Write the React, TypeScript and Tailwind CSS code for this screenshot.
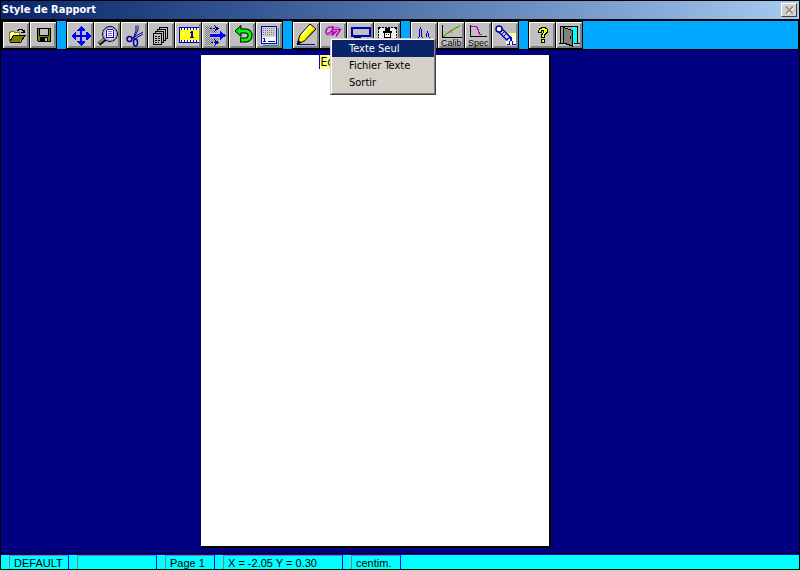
import React from "react";

type IconProps = { children: React.ReactNode };

function Icon({ children }: IconProps) {
  return (
    <svg
      className="block h-[27px] w-[27px]"
      viewBox="0 0 27 27"
      fill="none"
      shapeRendering="crispEdges"
      aria-hidden="true"
    >
      {children}
    </svg>
  );
}

function ToolButton({
  label,
  caption,
  children,
}: {
  label: string;
  caption?: string;
  children: React.ReactNode;
}) {
  return (
    <button
      type="button"
      aria-label={label}
      className="relative block h-[27px] w-[27px] shrink-0 bg-[#c0c0c0]"
    >
      <Icon>
        <path d="M0 26.5H27M26.5 0V27" stroke="#000" />
        <path d="M0.5 26V0.5H26" stroke="#fff" />
        <path d="M1 25.5H25.5V1M2 24.5H24.5V2" stroke="#808080" />
        {children}
      </Icon>
      {caption && (
        <span className="absolute bottom-[2px] left-[3px] font-['Liberation_Sans',sans-serif] text-[9px] leading-[8px] text-black">
          {caption}
        </span>
      )}
    </button>
  );
}

function Group({ children }: IconProps) {
  return <div className="flex border-t border-l border-black">{children}</div>;
}

const menuItems = ["Texte Seul", "Fichier Texte", "Sortir"];

function TextMenu() {
  return (
    <div
      role="menu"
      className="absolute top-[16px] left-[10px] z-10 w-[106px] border border-t-[#d4d0c8] border-l-[#d4d0c8] border-r-[#404040] border-b-[#404040] bg-[#d4d0c8]"
    >
      <div className="border border-t-white border-l-white border-r-[#808080] border-b-[#808080] pb-[2px]">
        {menuItems.map((item, i) => (
          <button
            key={item}
            type="button"
            role="menuitem"
            className={
              i === 0
                ? "block h-[17px] w-full bg-[#0a246a] pl-[17px] text-left leading-[18px] text-white"
                : "block h-[17px] w-full pl-[17px] text-left leading-[18px] text-black"
            }
          >
            {item}
          </button>
        ))}
      </div>
    </div>
  );
}

function Toolbar() {
  return (
    <div className="mr-px flex gap-[9px] border-t-2 border-b border-black bg-[#00a8ff]">
      <div className="flex border-t border-l-2 border-black">
        <ToolButton label="Ouvrir">
          <path d="M6 10H7V9H11V10H16V13H10L6 19Z" fill="#ffffa0" />
          <path d="M6.5 19V10.5H7.5V9.5H11.5V10.5H16.5V13" stroke="#808000" />
          <path d="M6 20L11 13H22L17 20Z" fill="#808000" />
          <path d="M6.5 20.5H17.5L22 13.5H10.5L7 19" stroke="#000" />
          <path d="M14 8.5H15V7.5H19V8.5H20V10M18 10.5H22M21.5 8V11" stroke="#000" />
        </ToolButton>
        <ToolButton label="Enregistrer">
          <path d="M7 6H21V20H8L7 19Z" fill="#000" />
          <path d="M8 7H20V19H8Z" fill="#808000" />
          <path d="M10 7H18V13H10Z" fill="#c0c0c0" />
          <path d="M9.5 7V13.5H18.5V7" stroke="#000" />
          <path d="M10 15H18V20H10Z" fill="#000" />
          <path d="M15 16H17V19H15Z" fill="#c0c0c0" />
        </ToolButton>
      </div>
      <Group>
        <ToolButton label="Déplacer">
          <path
            d="M14 4L18 8V9H15V13H19V10H20L24 14L20 18H19V15H15V19H18V20L14 24L10 20V19H13V15H9V18H8L4 14L8 10H9V13H13V9H10V8Z"
            fill="#0000ff"
          />
        </ToolButton>
        <ToolButton label="Loupe">
          <g shapeRendering="auto">
            <path d="M11 17L5 22" stroke="#000" strokeWidth="4" />
            <path d="M11 16L5 21" stroke="#909090" strokeWidth="2" />
            <circle cx="16" cy="12" r="7.5" fill="#d8d8d8" stroke="#000" />
            <circle cx="16" cy="12" r="6.5" stroke="#909090" />
          </g>
          <path d="M13.5 7.5H18.5L19.5 8.5V15.5H12.5V8.5Z" fill="#fff" stroke="#0000ff" />
          <path d="M14 9.5H18M14 11.5H18M14 13.5H18" stroke="#8080c0" />
        </ToolButton>
        <ToolButton label="Couper">
          <g shapeRendering="auto">
            <path d="M15 3.5V9L12 17M17 3.5V8L13 16" stroke="#0000a0" />
            <path d="M22 10L11 16.5M22 12L13 17.5" stroke="#0000a0" />
            <circle cx="8.5" cy="17" r="2.5" stroke="#0000a0" strokeWidth="1.5" />
            <ellipse cx="14.5" cy="20.5" rx="2" ry="3.5" stroke="#0000a0" strokeWidth="1.5" />
          </g>
        </ToolButton>
        <ToolButton label="Pages">
          <path d="M11.5 5.5H19.5V16.5H11.5Z" fill="#c0c0c0" stroke="#000" />
          <path d="M9.5 7.5H17.5V18.5H9.5Z" fill="#c0c0c0" stroke="#000" />
          <path d="M7.5 9.5H15.5V20.5H7.5Z" fill="#c0c0c0" stroke="#000" />
          <path d="M5.5 11.5H13.5V22.5H5.5Z" fill="#c0c0c0" stroke="#000" />
          <path d="M7 14.5H13M7 16.5H13M7 18.5H13M7 20.5H11" stroke="#000" strokeDasharray="2 1" />
        </ToolButton>
        <ToolButton label="Règle">
          <path d="M4 5H24V21H4Z" fill="#ffff00" />
          <path d="M4 5.5H24M4 20.5H24" stroke="#0000c0" />
          <path d="M5 7H24M5 19H24" stroke="#fff" strokeWidth="2" />
          <path d="M6 7H24M6 19H24" stroke="#0000c0" strokeWidth="2" strokeDasharray="1 2" />
          <path d="M4.5 5V21" stroke="#0000c0" />
          <path d="M16 9H18V15H19V16H15V15H16V11H15V10H16Z" fill="#0000c0" />
          <path d="M8 11H10V13H8Z" fill="#fff" />
        </ToolButton>
        <ToolButton label="Aligner">
          <path
            d="M3 4.5H11M4 5.5H12M3 6.5H11M4 7.5H12M3 8.5H15M4 9.5H16M3 10.5H17M4 11.5H8M3 12.5H8M4 13.5H8M3 14.5H8M4 15.5H8M3 16.5H17M4 17.5H18M3 18.5H17M4 19.5H14M3 20.5H11M4 21.5H11M3 22.5H11"
            stroke="#808080"
            strokeDasharray="1 1"
          />
          <path d="M8 6.5H14M9 20.5H14" stroke="#0000a0" strokeDasharray="2 1" />
          <path d="M12 3L17 6.5L12 10L14 6.5ZM12 17L17 20.5L12 24L14 20.5Z" fill="#0000a0" />
          <path d="M8 12H18V9L24 13.5L18 18V15H8Z" fill="#0000ff" />
        </ToolButton>
        <ToolButton label="Annuler">
          <g shapeRendering="auto">
            <path d="M10 9H17Q21 9.5 21 13.5Q21 17.5 17 18H11" stroke="#000" strokeWidth="5" />
            <path d="M12 3.5V14.5L6 9Z" fill="#00e000" stroke="#000" />
            <path d="M10 9H17Q21 9.5 21 13.5Q21 17.5 17 18H12" stroke="#00ff00" strokeWidth="3" />
          </g>
        </ToolButton>
        <ToolButton label="Rapport">
          <path d="M7 23H22V6" stroke="#00a0a0" />
          <path d="M5.5 4.5H20.5V21.5H5.5Z" fill="#d0d0d0" stroke="#0000c0" />
          <path d="M7 6.5H19M7 8.5H19M7 10.5H19M7 12.5H19" stroke="#808080" strokeDasharray="1 1" />
          <path d="M6 15H20V21H6Z" fill="#fff" />
          <path d="M8.5 16V20M7 16.5H8M7 19.5H10M12 19.5H19" stroke="#0000c0" />
        </ToolButton>
      </Group>
      <Group>
        <ToolButton label="Dessiner">
          <path d="M4 22.5H22" stroke="#0000c0" />
          <g shapeRendering="auto">
            <path d="M17 2L23 7L12 18.5L4 22.5L7 13Z" fill="#ffff00" stroke="#000" />
            <path d="M16 4L8 13L10 14L18 5Z" fill="#ffffc0" />
            <path d="M21.5 7L12 17.5" stroke="#808000" />
            <path d="M4 22.5L5.5 18L8.5 20.5Z" fill="#000" />
          </g>
        </ToolButton>
        <div className="relative">
          <ToolButton label="Ecrire">
            <g shapeRendering="auto">
              <path
                d="M14 5H11Q7 5 6 9Q5 12 8 11.5Q11 11 13.5 5L12 11.5L15 9.5M14 7.5H20.5L16 14.5M12 13.5L17 9"
                stroke="#c000c0"
                strokeWidth="1.5"
              />
              <path d="M15 5L20 6M6 13H11" stroke="#7070a0" />
            </g>
            <path d="M10 18.5H13" stroke="#0000c0" />
          </ToolButton>
          <TextMenu />
        </div>
        <ToolButton label="Cadre">
          <path d="M5 6H23V14H5Z" stroke="#0000c0" strokeWidth="2" />
          <path d="M7 15.5H14" stroke="#000" />
        </ToolButton>
        <ToolButton label="Image">
          <path d="M5 6H22V23H5Z" fill="#f0f0f0" />
          <path d="M5 5.5H22M4.5 6V23M22.5 6V23" stroke="#000" strokeDasharray="2 1" />
          <path d="M4 5H6V7H4ZM21 5H23V7H21Z" fill="#000" />
          <path d="M11 6H16V9H18V11H9V9H11Z" fill="#000" />
          <path d="M10.5 10.5H16.5V15.5H10.5Z" fill="#fff" stroke="#000" />
          <path d="M12 12H13V13H12ZM14 12H15V13H14Z" fill="#000" />
        </ToolButton>
      </Group>
      <Group>
        <ToolButton label="Chromatogramme">
          <path d="M7.5 17V15M8.5 15V7M9.5 7V5M10.5 7V15M11.5 15V17M15.5 15V11M16.5 11V9M17.5 11V15M18.5 15V17" stroke="#0000c0" />
        </ToolButton>
        <ToolButton label="Etalonnage" caption="Calib">
          <path d="M4.5 3V15.5H24" stroke="#000" />
          <g shapeRendering="auto">
            <path d="M5 15L11 10L22 3.5" stroke="#ff0000" />
          </g>
          <path d="M7 11H9V13H7ZM12 9H14V11H12ZM15 6H17V8H15ZM19 4H21V6H19Z" fill="#00ff00" />
        </ToolButton>
        <ToolButton label="Spectre" caption="Spec">
          <path d="M5.5 3V14.5H22" stroke="#000" />
          <path d="M6 4.5H11.5V5.5H12.5V7.5H13.5V10.5H14.5V12.5H17" stroke="#c000c0" />
        </ToolButton>
        <ToolButton label="Recherche">
          <path d="M14 11H24V23H14Z" fill="#fff" />
          <path d="M14 11.5H24M15 13.5H24M14 16.5H24M15 19.5H24M14 22.5H24" stroke="#ffff00" strokeDasharray="1 1" />
          <path d="M15 22.5H17.5V19M18.5 19V15M19.5 15V19M20.5 19V22.5H24" stroke="#0000ff" />
          <g shapeRendering="auto">
            <path d="M8 8L17 17" stroke="#0000a0" strokeWidth="6" />
            <path d="M8 8L16 16" stroke="#d0d0ff" strokeWidth="3" />
            <circle cx="7" cy="7" r="3" fill="#fff" stroke="#0000a0" strokeWidth="1.5" />
            <path d="M9 13L13 9M11 15L15 11" stroke="#0000a0" />
          </g>
        </ToolButton>
      </Group>
      <Group>
        <ToolButton label="Aide">
          <path d="M9 11V8H10V6H12V5H17V6H18V7H19V11H18V12H17V13H16V16H12V12H13V11H14V9H13V11Z" fill="#000" />
          <path d="M10 10V8H11V7H13V6H16V7H18V10H17V11H16V12H15V15H13V13H14V11H15V8H12V10Z" fill="#ffff00" />
          <path d="M12 17H16V21H12Z" fill="#000" />
          <path d="M13 18H15V20H13Z" fill="#ffff00" />
        </ToolButton>
        <ToolButton label="Quitter">
          <path d="M4 4H22V21H4Z" fill="#a0a0a0" />
          <path d="M4.5 21V4.5H21.5V21M3 21.5H8M18 21.5H24" stroke="#000" />
          <path d="M16 5H21V21H16Z" fill="#00ffff" />
          <path d="M7.5 5.5L16.5 8.5V24L7.5 21Z" fill="#808080" stroke="#000" />
          <path d="M14 14H15V17H14Z" fill="#000" />
        </ToolButton>
      </Group>
    </div>
  );
}

function StatusBar() {
  return (
    <footer className="border-y border-black bg-[#00ffff] font-['Liberation_Sans',sans-serif] text-[11px] leading-[14px] text-black">
      <div className="flex h-[15px] gap-2 border-t border-[#0000ff] pl-2 whitespace-pre">
        <span className="w-[60px] border-t border-r border-l border-t-[#808080] border-r-[#0000ff] border-l-[#808080] pl-1">
          DEFAULT
        </span>
        <span className="w-[80px] border-t border-r border-l border-t-[#808080] border-r-[#0000ff] border-l-[#808080]" />
        <span className="w-[50px] border-t border-r border-l border-t-[#808080] border-r-[#0000ff] border-l-[#808080] pl-1">
          Page 1
        </span>
        <span className="w-[120px] border-t border-r border-l border-t-[#808080] border-r-[#0000ff] border-l-[#808080] pl-1">
          X = -2.05 Y = 0.30
        </span>
        <span className="w-[50px] border-t border-r border-l border-t-[#808080] border-r-[#0000ff] border-l-[#808080] pl-1">
          centim.
        </span>
      </div>
    </footer>
  );
}

export default function App() {
  return (
    <div className="flex min-h-screen flex-col bg-[#d4d0c8] pb-[2px] font-['DejaVu_Sans_Condensed','DejaVu_Sans',sans-serif] text-[11px]">
      <div className="flex flex-1 flex-col border border-b-0 border-black bg-black">
        <header className="flex h-[18px] items-center justify-between bg-linear-to-r from-[#0a246a] to-[#a6caf0] pr-[2px] pl-px">
          <h1 className="font-bold text-white">Style de Rapport</h1>
          <button
            type="button"
            aria-label="Fermer"
            className="flex h-[14px] w-[16px] items-center justify-center border border-t-white border-l-white border-r-[#404040] border-b-[#404040] bg-[#d4d0c8]"
          >
            <svg className="h-[8px] w-[9px]" viewBox="0 0 9 8" fill="none" aria-hidden="true">
              <path d="M2 1L9 8M9 1L2 8" stroke="#fff" strokeWidth="1.5" />
              <path d="M1 0.5L8 7.5M8 0.5L1 7.5" stroke="#808080" strokeWidth="1.5" />
            </svg>
          </button>
        </header>
        <Toolbar />
        <main className="flex flex-1 flex-col bg-[#000080] pt-[5px] pb-[5px]">
          <div className="ml-[25%] w-[350px] flex-1 border-r-2 border-b-2 border-black bg-white pl-[118px]">
            <span className="inline-block h-[14px] border-l border-[#0000ff] bg-[#ffff80] px-px text-[12px] leading-[15px] text-black">
              Ecrire
            </span>
          </div>
        </main>
        <StatusBar />
      </div>
    </div>
  );
}
